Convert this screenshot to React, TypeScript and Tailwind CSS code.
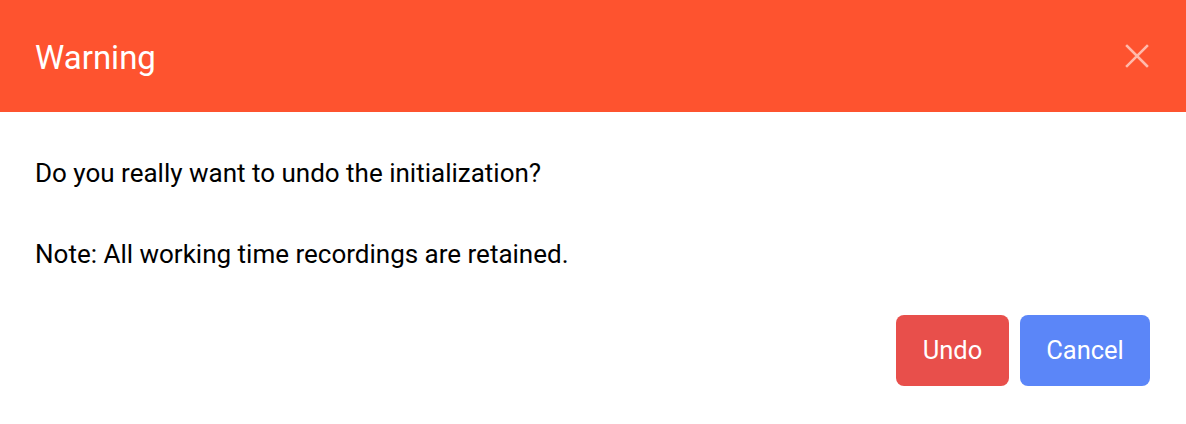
export default function App() {
  return (
    <div className="w-[1186px] h-[424px] bg-white font-['Roboto',sans-serif]">
      <div className="h-[112px] bg-[#fe532f] flex items-center justify-between pl-[35px] pr-[37px]">
        <h1 className="text-[33px] text-white font-normal leading-none pt-[2px]">Warning</h1>
        <button className="w-[24px] h-[24px] flex items-center justify-center text-white/60">
          <svg width="24" height="24" viewBox="0 0 24 24" fill="none" stroke="currentColor" strokeWidth="2.5" strokeLinecap="square">
            <path d="M2 2L22 22M22 2L2 22" />
          </svg>
        </button>
      </div>
      <div className="px-[35px] pt-[47px]">
        <p className="text-[26px] leading-[28px] text-black">Do you really want to undo the initialization?</p>
        <p className="text-[26px] leading-[28px] text-black mt-[53px]">Note: All working time recordings are retained.</p>
        <div className="flex justify-end gap-[11px] mt-[47px] pr-[1px]">
          <button className="w-[113px] h-[71px] rounded-[8px] bg-[#e84f4b] text-white text-[25.5px]">Undo</button>
          <button className="w-[130px] h-[71px] rounded-[8px] bg-[#5b86f8] text-white text-[25.5px]">Cancel</button>
        </div>
      </div>
    </div>
  );
}
